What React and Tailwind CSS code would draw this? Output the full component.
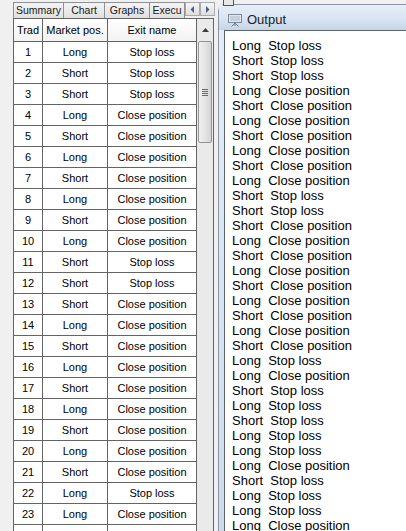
import React from 'react';

const trades = [
  ['Long', 'Stop loss'], ['Short', 'Stop loss'], ['Short', 'Stop loss'], ['Long', 'Close position'],
  ['Short', 'Close position'], ['Long', 'Close position'], ['Short', 'Close position'], ['Long', 'Close position'],
  ['Short', 'Close position'], ['Long', 'Close position'], ['Short', 'Stop loss'], ['Short', 'Stop loss'],
  ['Short', 'Close position'], ['Long', 'Close position'], ['Short', 'Close position'], ['Long', 'Close position'],
  ['Short', 'Close position'], ['Long', 'Close position'], ['Short', 'Close position'], ['Long', 'Close position'],
  ['Short', 'Close position'], ['Long', 'Stop loss'], ['Long', 'Close position'],
];

const output = [
  ...trades,
  ['Short', 'Stop loss'], ['Long', 'Stop loss'], ['Short', 'Stop loss'], ['Long', 'Stop loss'], ['Long', 'Stop loss'],
  ['Long', 'Close position'], ['Short', 'Stop loss'], ['Long', 'Stop loss'], ['Long', 'Stop loss'],
  ['Long', 'Close position'],
];

const tabs = [
  { label: 'Summary', w: 'w-[51px]' },
  { label: 'Chart', w: 'w-[42px]' },
  { label: 'Graphs', w: 'w-[46px]' },
  { label: 'Execu', w: 'w-[36px]' },
];

const ScreenIcon = () => (
  <svg width="14" height="14" viewBox="0 0 14 14">
    <rect x="0.5" y="1.5" width="13" height="8" fill="#dfe6ee" stroke="#7d8a99" />
    <rect x="2" y="3" width="10" height="5" fill="#c4d0dc" />
    <path d="M7 9.5 L7 13 M7 10 L3.5 13.5 M7 10 L10.5 13.5" stroke="#6f7a86" strokeWidth="1" fill="none" />
  </svg>
);

const TabStrip = () => (
  <div className="h-[20px] flex items-start pt-[2px] pl-[13px]">
    {tabs.map((t) => (
      <div
        key={t.label}
        className={`${t.w} h-[16px] -mr-px border border-[#8e9096] border-b-0 bg-gradient-to-b from-[#f4f4f4] to-[#e0e0e0] text-[10.5px] leading-[15px] text-[#1a1a1a] text-center overflow-hidden whitespace-nowrap`}
      >
        {t.label}
      </div>
    ))}
    <div className="flex ml-px">
      {['left', 'right'].map((d) => (
        <div key={d} className="w-[15px] h-[14px] border border-[#a6aab2] bg-gradient-to-b from-[#f6f6f6] to-[#dedede] flex items-center justify-center">
          <svg width="5" height="7" viewBox="0 0 5 7">
            {d === 'left' ? <path d="M4 0 L4 7 L0.5 3.5 Z" fill="#4d6185" /> : <path d="M1 0 L1 7 L4.5 3.5 Z" fill="#4d6185" />}
          </svg>
        </div>
      ))}
    </div>
  </div>
);

const Grid = () => (
  <div className="ml-[13px] w-[201px] border-l border-t border-r border-[#646464] bg-white flex">
    <div className="w-[183px]">
      <div className="h-[23px] flex border-b border-[#646464] bg-gradient-to-b from-white to-[#f2f2f2]">
        <div className="w-[29px] border-r border-[#646464] flex items-center justify-center overflow-hidden whitespace-nowrap">Trad</div>
        <div className="w-[65px] border-r border-[#646464] flex items-center justify-center whitespace-nowrap">Market pos.</div>
        <div className="w-[89px] border-r border-[#646464] flex items-center justify-center">Exit name</div>
      </div>
      {trades.map(([pos, exit], i) => (
        <div key={i} className="h-[21px] flex border-b border-[#646464]">
          <div className="w-[29px] border-r border-[#646464] flex items-center justify-center">{i + 1}</div>
          <div className="w-[65px] border-r border-[#646464] flex items-center justify-center">{pos}</div>
          <div className="w-[89px] border-r border-[#646464] flex items-center justify-center">{exit}</div>
        </div>
      ))}
      {/* next row, cut off by the window edge */}
      <div className="h-[21px] flex">
        <div className="w-[29px] border-r border-[#646464]" />
        <div className="w-[65px] border-r border-[#646464]" />
        <div className="w-[89px] border-r border-[#646464]" />
      </div>
    </div>
    {/* vertical scrollbar */}
    <div className="w-[16px] bg-[#eaeaea] flex flex-col items-center">
      <div className="h-[22px] w-full flex items-center justify-center">
        <svg width="7" height="4" viewBox="0 0 7 4">
          <path d="M0 4 L3.5 0 L7 4 Z" fill="#3d3d3d" />
        </svg>
      </div>
      <div className="w-[14px] h-[102px] rounded-[2px] border border-[#959595] bg-gradient-to-r from-[#f1f1f1] via-[#e4e4e4] to-[#d4d4d4] flex items-center justify-center">
        <div className="flex flex-col gap-[1px]">
          <div className="w-[6px] h-px bg-[#6a6a6a]" />
          <div className="w-[6px] h-px bg-[#6a6a6a]" />
          <div className="w-[6px] h-px bg-[#6a6a6a]" />
          <div className="w-[6px] h-px bg-[#6a6a6a]" />
        </div>
      </div>
    </div>
  </div>
);

const OutputWindow = () => (
  <div className="flex-1 mt-[4px] rounded-tl-[7px] border-l border-t border-[#8a96a6] bg-gradient-to-b from-[#e4edf7] via-[#d9e5f2] to-[#cddbeb] flex flex-col">
    <div className="h-[28px] flex items-center pl-[9px] gap-[5px] bg-gradient-to-b from-[#e6eef8] via-[#dae6f3] to-[#c6d5e7]">
      <div className="mt-[5px]"><ScreenIcon /></div>
      <span className="text-[13px] text-[#222] mt-[5px]">Output</span>
    </div>
    <div className="flex-1 ml-[5px] border-l border-t border-[#5d6470] bg-white pl-[7px] pt-[7px] text-[13px] leading-[15px] text-black">
      {output.map(([pos, exit], i) => (
        <div key={i} className="whitespace-pre">{`${pos}  ${exit}`}</div>
      ))}
    </div>
  </div>
);

export default function App() {
  return (
    <div
      className="w-[406px] h-[531px] overflow-hidden relative bg-[#f0f0f0] flex text-[11px] text-black"
      style={{ fontFamily: '"Liberation Sans", Arial, sans-serif' }}
    >
      <div className="w-[218px] shrink-0 flex flex-col">
        <TabStrip />
        <Grid />
      </div>
      {/* fragment of a window behind the output panel */}
      <div className="absolute left-[223px] top-0 w-[11px] h-[6px] border border-t-0 border-[#555] bg-[#e8e8e8]" />
      <OutputWindow />
    </div>
  );
}
